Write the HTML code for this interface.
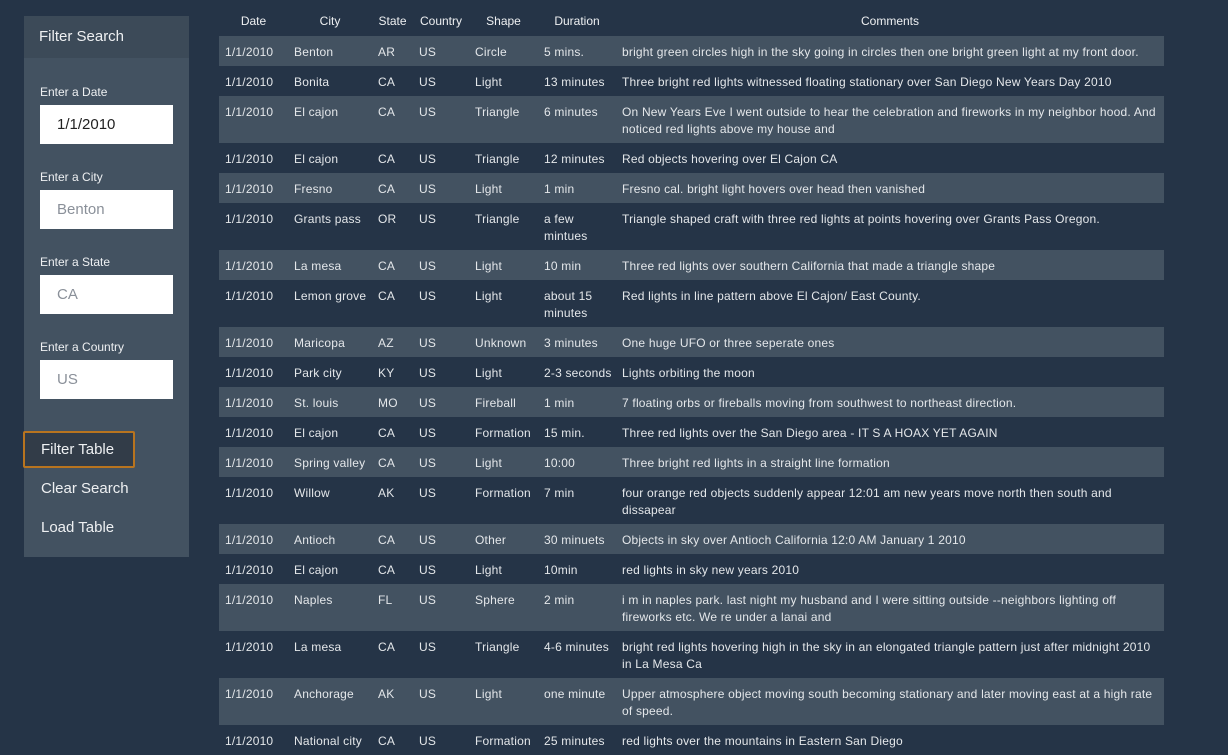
<!DOCTYPE html>
<html><head><meta charset="utf-8"><style>
*{margin:0;padding:0;box-sizing:border-box}
body{width:1228px;height:747px;overflow:hidden;background:#253447;font-family:"Liberation Sans",sans-serif;color:#e4e7ea;position:relative}
.panel{position:absolute;left:24px;top:16px;width:165px;height:541px;background:#435261}
.ph{height:42px;background:#3c4a58;font-size:15px;padding:12px 0 0 15px;color:#eef0f2}
.lbl{position:absolute;left:16px;font-size:12px;color:#eef0f2}
.inp{position:absolute;left:16px;width:133px;height:39px;background:#fff;font-size:15px;padding:11px 0 0 17px;color:#8a9099}
.btn{position:absolute;left:17px;font-size:15px;color:#eef0f2}
.fb{position:absolute;left:-1px;top:415px;width:112px;height:37px;border:2px solid #b8741f;background:#323c48;border-radius:2px}
table{position:absolute;left:219px;top:6px;width:945px;table-layout:fixed;border-collapse:collapse;font-size:12px;letter-spacing:0.2px}
th{font-weight:normal;height:30px;text-align:center;color:#eef0f2;padding-top:0;letter-spacing:0}
td{padding:8px 6px 5px;line-height:17px;vertical-align:top;white-space:nowrap;overflow:visible}
tbody tr:nth-child(odd){background:#435261}
</style></head><body>
<div class="panel">
<div class="ph">Filter Search</div>
<div class="lbl" style="top:69px">Enter a Date</div>
<div class="inp" style="top:89px;color:#222">1/1/2010</div>
<div class="lbl" style="top:154px">Enter a City</div>
<div class="inp" style="top:174px">Benton</div>
<div class="lbl" style="top:239px">Enter a State</div>
<div class="inp" style="top:259px">CA</div>
<div class="lbl" style="top:324px">Enter a Country</div>
<div class="inp" style="top:344px">US</div>
<div class="fb"></div>
<div class="btn" style="top:425px">Filter Table</div>
<div class="btn" style="top:464px">Clear Search</div>
<div class="btn" style="top:503px">Load Table</div>
</div>
<table>
<colgroup><col style="width:69px"><col style="width:84px"><col style="width:41px"><col style="width:56px"><col style="width:69px"><col style="width:78px"><col style="width:548px"></colgroup>
<thead><tr><th>Date</th><th>City</th><th>State</th><th>Country</th><th>Shape</th><th>Duration</th><th>Comments</th></tr></thead>
<tbody>
<tr><td>1/1/2010</td><td>Benton</td><td>AR</td><td>US</td><td>Circle</td><td>5 mins.</td><td>bright green circles high in the sky going in circles then one bright green light at my front door.</td></tr>
<tr><td>1/1/2010</td><td>Bonita</td><td>CA</td><td>US</td><td>Light</td><td>13 minutes</td><td>Three bright red lights witnessed floating stationary over San Diego New Years Day 2010</td></tr>
<tr><td>1/1/2010</td><td>El cajon</td><td>CA</td><td>US</td><td>Triangle</td><td>6 minutes</td><td>On New Years Eve I went outside to hear the celebration and fireworks in my neighbor hood. And<br>noticed red lights above my house and</td></tr>
<tr><td>1/1/2010</td><td>El cajon</td><td>CA</td><td>US</td><td>Triangle</td><td>12 minutes</td><td>Red objects hovering over El Cajon CA</td></tr>
<tr><td>1/1/2010</td><td>Fresno</td><td>CA</td><td>US</td><td>Light</td><td>1 min</td><td>Fresno cal. bright light hovers over head then vanished</td></tr>
<tr><td>1/1/2010</td><td>Grants pass</td><td>OR</td><td>US</td><td>Triangle</td><td>a few<br>mintues</td><td>Triangle shaped craft with three red lights at points hovering over Grants Pass Oregon.</td></tr>
<tr><td>1/1/2010</td><td>La mesa</td><td>CA</td><td>US</td><td>Light</td><td>10 min</td><td>Three red lights over southern California that made a triangle shape</td></tr>
<tr><td>1/1/2010</td><td>Lemon grove</td><td>CA</td><td>US</td><td>Light</td><td>about 15<br>minutes</td><td>Red lights in line pattern above El Cajon/ East County.</td></tr>
<tr><td>1/1/2010</td><td>Maricopa</td><td>AZ</td><td>US</td><td>Unknown</td><td>3 minutes</td><td>One huge UFO or three seperate ones</td></tr>
<tr><td>1/1/2010</td><td>Park city</td><td>KY</td><td>US</td><td>Light</td><td>2-3 seconds</td><td>Lights orbiting the moon</td></tr>
<tr><td>1/1/2010</td><td>St. louis</td><td>MO</td><td>US</td><td>Fireball</td><td>1 min</td><td>7 floating orbs or fireballs moving from southwest to northeast direction.</td></tr>
<tr><td>1/1/2010</td><td>El cajon</td><td>CA</td><td>US</td><td>Formation</td><td>15 min.</td><td>Three red lights over the San Diego area - IT S A HOAX YET AGAIN</td></tr>
<tr><td>1/1/2010</td><td>Spring valley</td><td>CA</td><td>US</td><td>Light</td><td>10:00</td><td>Three bright red lights in a straight line formation</td></tr>
<tr><td>1/1/2010</td><td>Willow</td><td>AK</td><td>US</td><td>Formation</td><td>7 min</td><td>four orange red objects suddenly appear 12:01 am new years move north then south and<br>dissapear</td></tr>
<tr><td>1/1/2010</td><td>Antioch</td><td>CA</td><td>US</td><td>Other</td><td>30 minuets</td><td>Objects in sky over Antioch California 12:0 AM January 1 2010</td></tr>
<tr><td>1/1/2010</td><td>El cajon</td><td>CA</td><td>US</td><td>Light</td><td>10min</td><td>red lights in sky new years 2010</td></tr>
<tr><td>1/1/2010</td><td>Naples</td><td>FL</td><td>US</td><td>Sphere</td><td>2 min</td><td>i m in naples park. last night my husband and I were sitting outside --neighbors lighting off<br>fireworks etc. We re under a lanai and</td></tr>
<tr><td>1/1/2010</td><td>La mesa</td><td>CA</td><td>US</td><td>Triangle</td><td>4-6 minutes</td><td>bright red lights hovering high in the sky in an elongated triangle pattern just after midnight 2010<br>in La Mesa Ca</td></tr>
<tr><td>1/1/2010</td><td>Anchorage</td><td>AK</td><td>US</td><td>Light</td><td>one minute</td><td>Upper atmosphere object moving south becoming stationary and later moving east at a high rate<br>of speed.</td></tr>
<tr><td>1/1/2010</td><td>National city</td><td>CA</td><td>US</td><td>Formation</td><td>25 minutes</td><td>red lights over the mountains in Eastern San Diego</td></tr>
</tbody></table>
</body></html>
